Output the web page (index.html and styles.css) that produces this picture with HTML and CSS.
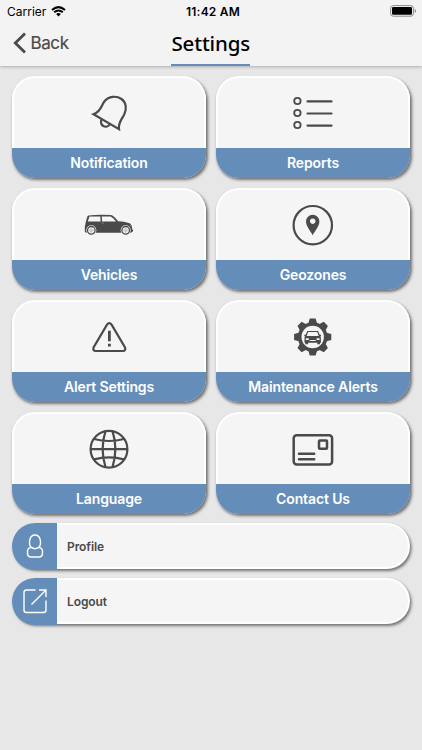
FILE: index.html
```html
<!DOCTYPE html>
<html lang="en">
<head>
<meta charset="utf-8">
<title>Settings</title>
<link rel="stylesheet" href="styles.css">
</head>
<body>
<header class="header">
  <div class="status">
    <div class="carrier"><span>Carrier</span>
      <svg width="15" height="11" viewBox="0 0 15 11"><path d="M1 4Q7.5-1.8 14 4M3.2 6.3Q7.5 2.6 11.8 6.3" fill="none" stroke="#000" stroke-width="2"/><path d="M5.1 8.1Q7.5 6.1 9.9 8.1L7.5 10.5Z"/></svg>
    </div>
    <div class="time">11:42 AM</div>
    <div class="battery">
      <svg width="27" height="12" viewBox="0 0 27 12"><rect x=".6" y=".6" width="22.8" height="10.6" rx="2.6" fill="none" stroke="#888"/><rect x="2" y="2" width="20" height="7.8" rx="1.2"/><path d="M24.7 4v4q1.4-.6 1.4-2t-1.4-2Z" fill="#888"/></svg>
    </div>
  </div>
  <nav class="nav">
    <div class="back">
      <svg width="14" height="22" viewBox="0 0 14 22"><path d="M12 1.5 2.3 11 12 20.5" fill="none" stroke="#4a4a4a" stroke-width="2.8"/></svg>
      <span>Back</span>
    </div>
    <h1 class="title">Settings</h1>
  </nav>
</header>
<main class="content">
  <div class="grid">
    <section class="card"><div class="art"><svg class="icon" viewBox="0 0 60 60"><path d="M14.5 32.3C22.5 29.5 22 23.5 25.5 19.2C29.7 14 37.5 13.5 42.5 17C47.3 20.5 48 27 45.2 32.5C42.2 38 39 41 40 47.2Z"/><path d="M22.6 37.5a4.6 4.6 0 0 0 8.2 4.8"/></svg></div><div class="label">Notification</div></section>
    <section class="card"><div class="art"><svg class="icon" viewBox="0 0 60 60"><g stroke-width="1.8"><circle cx="14.4" cy="19" r="3.2"/><circle cx="14.4" cy="31" r="3.2"/><circle cx="14.4" cy="43" r="3.2"/></g><path stroke-linecap="round" d="M24.5 19.4h24M24.5 31.5h24M24.5 43.6h24"/></svg></div><div class="label">Reports</div></section>
    <section class="card"><div class="art"><svg class="icon" viewBox="0 0 60 60"><path class="solid" d="M9.5 21.4Q20 20.4 32 21.1Q34.5 21.6 39 27.2Q47 27.5 51.2 29.5Q53 31 53 34.5L54.2 36.5Q54 38.3 51.5 38.8H7L5.8 37.5V33L6.8 28L8.3 22.5Z"/><path class="paper" d="M10.5 22.6H21.3L21.6 27.4H8.8ZM22.8 22.6H31.6Q34 23.5 37 27.4H23.1Z"/><g stroke="#f5f5f5" stroke-width="1"><circle class="paper" cx="12.3" cy="36.3" r="5"/><circle class="paper" cx="46.7" cy="36.3" r="5"/></g><g stroke-width="1.3"><circle cx="12.3" cy="36.3" r="3.8"/><circle cx="46.7" cy="36.3" r="3.8"/></g><g stroke-width=".5" stroke="#aaa"><circle cx="12.3" cy="36.3" r="1.6"/><circle cx="46.7" cy="36.3" r="1.6"/><path d="M9.5 36.3h5.6m-2.8-2.8v5.6M43.9 36.3h5.6m-2.8-2.8v5.6M22.5 29h2.5M51 30.8l1.2 2"/></g></svg></div><div class="label">Vehicles</div></section>
    <section class="card"><div class="art"><svg class="icon" viewBox="0 0 60 60"><circle cx="29.8" cy="31.2" r="19.2"/><path class="solid" fill-rule="evenodd" d="M29.7 41.2C27.5 36.8 23 32.3 23 27.5A6.7 6.7 0 0 1 36.4 27.5C36.4 32.3 31.9 36.8 29.7 41.2ZM29.7 24.4a2.8 2.8 0 1 0 .01 0Z"/></svg></div><div class="label">Geozones</div></section>
    <section class="card"><div class="art"><svg class="icon" viewBox="0 0 60 60"><path d="M28 18.7Q30.3 15.6 32.6 18.7L45.9 41.2Q47.3 44.8 43.7 45H16.9Q13.3 44.8 14.7 41.2Z"/><path stroke-width="2.8" d="M30.4 24.8V35.3M30.4 37.8V40.6"/></svg></div><div class="label">Alert Settings</div></section>
    <section class="card"><div class="art"><svg class="icon" viewBox="0 0 60 60"><g transform="translate(29.7 31)"><g class="solid"><path id="tooth" d="M-4.6-13 -2.9-18.6H2.9L4.6-13V-10H-4.6Z"/><use href="#tooth" transform="rotate(45)"/><use href="#tooth" transform="rotate(90)"/><use href="#tooth" transform="rotate(135)"/><use href="#tooth" transform="rotate(180)"/><use href="#tooth" transform="rotate(225)"/><use href="#tooth" transform="rotate(270)"/><use href="#tooth" transform="rotate(315)"/><circle r="14.8"/></g><circle class="paper" r="11.2"/><path class="solid" d="M-5.4-6H5.4L7-2.2H8.4V-1L7.6-.8Q8.2 0 8.2.8V5.8H7.4V7.3H4.6V5.8H-4.6V7.3H-7.4V5.8H-8.2V.8Q-8.2 0-7.6-.8L-8.4-1V-2.2H-7Z"/><path class="paper" d="M-4.6-4.9H4.6L6-.9H-6ZM-6.9 1.3h3v1.6h-3ZM3.9 1.3h3v1.6h-3ZM-3 3h6v1h-6Z"/></g></svg></div><div class="label">Maintenance Alerts</div></section>
    <section class="card"><div class="art"><svg class="icon" viewBox="0 0 60 60"><g stroke-width="2.2"><circle cx="30" cy="31.2" r="18.4"/><path d="M26.5 13.2C23 24 23 38 26.5 49.2M33.5 13.2C37 24 37 38 33.5 49.2M11.6 31.2H48.4M15 21Q30 25 45 21M15 41.4Q30 37.4 45 41.4"/></g></svg></div><div class="label">Language</div></section>
    <section class="card"><div class="art"><svg class="icon" viewBox="0 0 60 60"><g stroke-width="2.5"><rect x="10.7" y="17.3" width="38.4" height="29.2" rx="3"/><rect x="36" y="22.4" width="8" height="8.4" rx=".8"/><path stroke-linecap="round" d="M16 35.8H31.2M16 41.2H31.2"/></g></svg></div><div class="label">Contact Us</div></section>
  </div>
  <div class="row"><div class="tab"><svg class="glyph" viewBox="0 0 30 30"><path d="M11.3 16.4C8.3 13.5 8.8 4 15 4S21.7 13.5 18.7 16.4Q15 19 11.3 16.4ZM11.3 16.4Q7.5 17 7.5 20.5V22.3Q7.5 26 11.2 26H18.8Q22.5 26 22.5 22.3V20.5Q22.5 17 18.7 16.4"/></svg></div><span class="row-text">Profile</span></div>
  <div class="row"><div class="tab"><svg class="glyph" viewBox="0 0 30 30"><path d="M15.5 4H6.5Q4 4 4 6.5V24Q4 26.5 6.5 26.5H23.5Q26 26.5 26 24V14.5M11.5 18.5 25.5 4.5M19 4H26V11"/></svg></div><span class="row-text">Logout</span></div>
</main>
</body>
</html>
```
FILE: styles.css
```css
* { box-sizing: border-box; }
body {
  margin: 0;
  min-height: 750px;
  background: #e7e7e7;
  font-family: Inter, "Liberation Sans", sans-serif;
  color: #4a4a4a;
}
svg { display: block; }
.header {
  height: 66px;
  background: #f3f3f3;
  box-shadow: 0 1px 3px rgba(0, 0, 0, .25);
}
.status {
  height: 22px;
  display: grid;
  grid-template-columns: 1fr auto 1fr;
  align-items: center;
  padding: 0 5px 0 7px;
  font-size: 12px;
  color: #000;
}
.carrier { display: flex; gap: 5px; align-items: center; }
.time { font-weight: 600; margin-left: 2px; letter-spacing: .2px; }
.battery { justify-self: end; }
.nav {
  height: 44px;
  display: grid;
  grid-template-columns: 1fr auto 1fr;
  padding: 0 13px 0 12.5px;
}
.back {
  display: flex;
  align-items: center;
  gap: 4px;
  height: 42px;
  font-size: 17px;
  letter-spacing: -.4px;
  -webkit-text-stroke: .2px #4a4a4a;
}
.title {
  margin: 0;
  height: 43.5px;
  font: 500 20.5px/42px "Noto Sans", sans-serif;
  letter-spacing: -.15px;
  color: #000;
  border-bottom: 2px solid #648eb9;
}
.content { padding: 10px 12px; }
.grid {
  display: grid;
  grid-template-columns: 194px 194px;
  gap: 10px;
}
.card {
  height: 102px;
  border-radius: 23px;
  box-shadow: 1.5px 2px 3px rgba(0, 0, 0, .5);
}
.art {
  height: 72px;
  display: flex;
  align-items: center;
  justify-content: center;
  background: #f5f5f5;
  border: 2px solid #fff;
  border-bottom: 0;
  border-radius: 23px 23px 0 0;
  padding-bottom: 2px;
}
.icon {
  width: 60px;
  height: 60px;
  fill: none;
  stroke: #4a4a4a;
  stroke-width: 2.2;
}
.solid { fill: #4a4a4a; }
g.solid, path.solid { stroke: none; }
.paper { fill: #f5f5f5; stroke: none; }
.label {
  height: 30px;
  line-height: 30px;
  text-align: center;
  background: #648eb9;
  border-radius: 0 0 23px 23px;
  color: #fff;
  font-size: 14px;
  font-weight: 600;
  letter-spacing: -.13px;
}
.row {
  display: flex;
  align-items: center;
  height: 46px;
  margin-top: 9px;
  width: 398px;
  border-radius: 23px;
  background: #f5f5f5;
  border: 2px solid #fff;
  box-shadow: 1.5px 2px 3px rgba(0, 0, 0, .5);
}
.tab {
  width: 45px;
  height: 47px;
  margin: -2px 0 -2px -2px;
  display: flex;
  align-items: center;
  justify-content: center;
  background: #648eb9;
  border-radius: 23px 0 0 23px;
}
.glyph {
  width: 30px;
  height: 30px;
  fill: none;
  stroke: #fff;
  stroke-width: 1.4;
}
.row-text {
  margin-left: 10px;
  font-size: 12px;
  font-weight: 600;
  letter-spacing: -.1px;
}
```
